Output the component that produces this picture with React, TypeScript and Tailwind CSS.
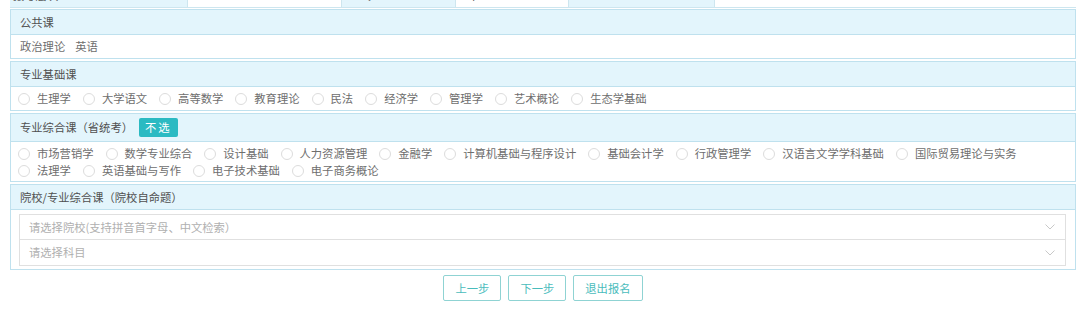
import React from "react";

const font = { fontFamily: '"Noto Sans CJK SC", "Noto Sans", sans-serif' };

function Radio({ label }: { label: string }) {
  return (
    <div className="flex items-center mr-[12px] h-[17px]">
      <span className="w-[12px] h-[12px] rounded-full border border-[#dcdcdc] bg-white mr-[7px]" />
      <span className="text-[11.3px] text-[#6e6e6e]">{label}</span>
    </div>
  );
}

function Header({ children }: { children: React.ReactNode }) {
  return (
    <div className="flex items-center px-[9px] bg-[#e3f5fc] border-b border-[#bfe1ee] text-[11.3px] text-[#505050]">
      {children}
    </div>
  );
}

function Chevron() {
  return (
    <svg width="10" height="6" viewBox="0 0 10 6" className="mr-[6px]">
      <path d="M0.5 0.5 L5 5 L9.5 0.5" fill="none" stroke="#c8c8c8" strokeWidth="1" />
    </svg>
  );
}

export default function App() {
  const basics = ["生理学", "大学语文", "高等数学", "教育理论", "民法", "经济学", "管理学", "艺术概论", "生态学基础"];
  const comp = [
    "市场营销学",
    "数学专业综合",
    "设计基础",
    "人力资源管理",
    "金融学",
    "计算机基础与程序设计",
    "基础会计学",
    "行政管理学",
    "汉语言文学学科基础",
    "国际贸易理论与实务",
    "法理学",
    "英语基础与写作",
    "电子技术基础",
    "电子商务概论",
  ];
  return (
    <div className="w-[1080px] h-[322px] bg-white overflow-hidden" style={font}>
      <div className="ml-[10px] w-[1066px]">
        {/* cut-off top row */}
        <div className="flex h-[8px] overflow-hidden border-b border-[#cde6ef] text-[11.3px] text-[#555]">
          <div className="w-[178px] bg-[#e3f5fc] border-r border-[#cde6ef] flex flex-col justify-end pb-[6px] pl-[3px] leading-[12px]">报考层次</div>
          <div className="w-[154px] bg-white border-r border-[#cde6ef]" />
          <div className="w-[114px] bg-[#e3f5fc] border-r border-[#cde6ef] flex flex-col justify-end pb-[6px] pl-[20px] leading-[12px]">专业</div>
          <div className="w-[113px] bg-white border-r border-[#cde6ef] flex flex-col justify-end pb-[6px] pl-[12px] leading-[12px]">本</div>
          <div className="w-[146px] bg-[#e3f5fc] border-r border-[#cde6ef]" />
          <div className="flex-1 bg-white" />
        </div>

        {/* 公共课 */}
        <div className="mt-[1px] border border-[#bfe1ee]">
          <Header>
            <div className="h-[24px] flex items-center">公共课</div>
          </Header>
          <div className="h-[23px] flex items-center px-[9px] text-[11.3px] text-[#6e6e6e] gap-[10px]">
            <span>政治理论</span>
            <span>英语</span>
          </div>
        </div>

        {/* 专业基础课 */}
        <div className="mt-[2px] border border-[#bfe1ee]">
          <Header>
            <div className="h-[24px] flex items-center">专业基础课</div>
          </Header>
          <div className="h-[23px] flex items-center px-[7px]">
            {basics.map((b) => (
              <Radio key={b} label={b} />
            ))}
          </div>
        </div>

        {/* 专业综合课 */}
        <div className="mt-[2px] border border-[#bfe1ee]">
          <Header>
            <div className="h-[27px] flex items-center">
              专业综合课（省统考）
              <span className="ml-[6px] h-[19px] px-[6px] flex items-center bg-[#2bbac2] text-white text-[11.3px] rounded-[2px] tracking-[2px]">
                不选
              </span>
            </div>
          </Header>
          <div className="flex flex-wrap px-[7px] pt-[3px] pb-[2px] w-[1050px]">
            {comp.map((b) => (
              <Radio key={b} label={b} />
            ))}
          </div>
        </div>

        {/* 院校 */}
        <div className="mt-[2px] border border-[#bfe1ee]">
          <Header>
            <div className="h-[24px] flex items-center">院校/专业综合课（院校自命题）</div>
          </Header>
          <div className="pl-[8px] pr-[9px] pt-[4px] pb-[3px]">
            <div className="h-[26px] border border-[#e0e0e0] bg-white flex items-center justify-between pl-[9px] pr-[4px] text-[11.3px] text-[#b0b0b0]">
              <span>请选择院校(支持拼音首字母、中文检索）</span>
              <Chevron />
            </div>
            <div className="h-[26px] border border-t-0 border-[#e0e0e0] bg-white flex items-center justify-between pl-[9px] pr-[4px] text-[11.3px] text-[#b0b0b0]">
              <span>请选择科目</span>
              <Chevron />
            </div>
          </div>
        </div>

        {/* buttons */}
        <div className="mt-[5px] flex justify-center gap-[7px]">
          {["上一步", "下一步", "退出报名"].map((t) => (
            <button
              key={t}
              className="h-[26px] px-[11px] border border-[#8fd3d3] rounded-[2px] bg-white text-[11.3px] text-[#49bcbc]"
            >
              {t}
            </button>
          ))}
        </div>
      </div>
    </div>
  );
}
